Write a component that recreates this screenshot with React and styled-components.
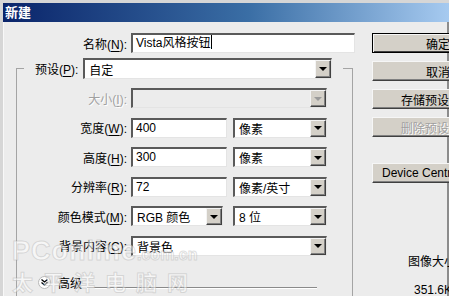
import React from "react";
import styled, { createGlobalStyle } from "styled-components";

const GlobalStyle = createGlobalStyle`
  html, body {
    margin: 0;
    padding: 0;
    background: #ececec;
  }
  body {
    width: 449px;
    height: 296px;
    overflow: hidden;
    font-family: "Liberation Sans", "Noto Sans CJK SC", sans-serif;
    font-size: 12px;
    color: #000;
  }
`;

const Window = styled.div`
  position: relative;
  width: 449px;
  height: 296px;
  box-sizing: border-box;
  overflow: hidden;
  padding-top: 3px;
  background: #d6d6d6;
  display: flex;
  flex-direction: column;
`;

const TitleBar = styled.div`
  height: 19px;
  margin-left: 3px;
  padding-left: 2px;
  line-height: 19px;
  font-weight: bold;
  font-size: 13px;
  color: #fff;
  background: linear-gradient(to right, #0a246a 0%, #3a6ea5 55%, #a6caf0 100%);
`;

const Body = styled.div`
  flex: 1;
  display: flex;
  margin-left: 3px;
  padding-top: 11px;
  background: #ececec;
  border-left: 1px solid #f8f8f8;
  border-right: 2px solid #8c8c8c;
  border-bottom: 2px solid #8c8c8c;
`;

const FormCol = styled.div`
  width: 367px;
  flex-shrink: 0;
  display: flex;
  flex-direction: column;
`;

const NameRow = styled.div`
  display: grid;
  grid-template-columns: 123px 224px;
  column-gap: 4px;
  align-items: center;
  height: 20px;
`;

const Label = styled.span`
  text-align: right;
  white-space: nowrap;
  color: ${(p) => (p.$disabled ? "#a0a0a0" : "#000")};
  text-shadow: ${(p) => (p.$disabled ? "1px 1px 0 #fff" : "none")};
`;

const Key = styled.u`
  text-underline-offset: 2px;
`;

const Input = styled.div`
  box-sizing: border-box;
  width: ${(p) => p.$w}px;
  height: 20px;
  padding-left: 3px;
  line-height: 17px;
  background: #fff;
  border-style: solid;
  border-width: 2px 1px 1px 2px;
  border-color: #5a5a5a #e4e4e4 #e4e4e4 #5a5a5a;
  white-space: nowrap;
  overflow: hidden;
`;

const Caret = styled.span`
  display: inline-block;
  width: 1px;
  height: 14px;
  margin-left: 1px;
  vertical-align: -2px;
  background: #000;
`;

const Select = styled.div`
  box-sizing: border-box;
  width: ${(p) => p.$w}px;
  height: ${(p) => p.$h || 20}px;
  display: flex;
  align-items: center;
  padding-left: 4px;
  background: ${(p) => (p.$disabled ? "#ececec" : "#fff")};
  border-style: solid;
  border-width: 2px 1px 1px 2px;
  border-color: #5a5a5a #e4e4e4 #e4e4e4 #5a5a5a;
  white-space: nowrap;
`;

const SelectText = styled.span`
  flex: 1;
  overflow: hidden;
`;

const ArrowBtn = styled.span`
  box-sizing: border-box;
  width: 16px;
  height: 100%;
  display: flex;
  align-items: center;
  justify-content: center;
  background: #d4d0c8;
  border-style: solid;
  border-width: 1px;
  border-color: #f4f4f4 #404040 #404040 #f4f4f4;
  box-shadow: inset -1px -1px 0 #808080;
  &::after {
    content: "";
    width: 0;
    height: 0;
    border-left: 4px solid transparent;
    border-right: 4px solid transparent;
    border-top: 4px solid ${(p) => (p.$disabled ? "#9a9a9a" : "#000")};
  }
`;

const Group = styled.fieldset`
  box-sizing: border-box;
  width: 337px;
  min-width: 0;
  margin: 5px 0 0 12px;
  padding: 9px 0 0 0;
  border: 1px solid #a4a4a4;
  border-bottom: none;
  flex: 1;
`;

const Legend = styled.legend`
  margin-left: 7px;
  padding: 0 11px;
`;

const LegendInner = styled.div`
  display: flex;
  align-items: center;
  gap: 5px;
`;

const Rows = styled.div`
  display: grid;
  grid-template-columns: 110px auto;
  column-gap: 4px;
  row-gap: 9.5px;
  align-items: center;
`;

const Fields = styled.div`
  display: flex;
  gap: ${(p) => p.$gap || 6}px;
`;

const Advanced = styled.div`
  display: flex;
  align-items: center;
  margin-top: 20px;
  padding-left: 21px;
  height: 14px;
`;

const Chevron = styled.span`
  box-sizing: border-box;
  width: 13px;
  height: 13px;
  border-radius: 50%;
  background: #fff;
  border: 1px solid #b8b8b8;
  display: flex;
  align-items: center;
  justify-content: center;
`;

const AdvText = styled.span`
  margin-left: 7px;
`;

const Rule = styled.span`
  width: 230px;
  margin-left: 5px;
  height: 0;
  border-top: 1px solid #8a8a8a;
  border-bottom: 1px solid #fff;
  align-self: flex-end;
  margin-bottom: 1px;
`;

const SideCol = styled.div`
  display: flex;
  flex-direction: column;
  gap: 8px;
  padding-left: 1px;
`;

const Button = styled.div`
  box-sizing: border-box;
  width: 132px;
  height: 20px;
  display: flex;
  align-items: center;
  justify-content: ${(p) => (p.$left ? "flex-start" : "center")};
  padding-left: ${(p) => (p.$left ? 9 : 0)}px;
  margin-top: ${(p) => p.$mt || 0}px;
  background: #d4d0c8;
  white-space: nowrap;
  color: ${(p) => (p.$disabled ? "#a0a0a0" : "#000")};
  text-shadow: ${(p) => (p.$disabled ? "1px 1px 0 #fff" : "none")};
  border-style: solid;
  border-width: 1px;
  border-color: ${(p) =>
    p.$default ? "#000" : "#f6f6f6 #404040 #404040 #f6f6f6"};
  box-shadow: ${(p) =>
    p.$default
      ? "inset 1px 1px 0 #f6f6f6, inset -1px -1px 0 #404040"
      : "inset -1px -1px 0 #808080"};
`;

const Info = styled.div`
  margin-left: 36px;
  margin-top: ${(p) => p.$mt}px;
  white-space: nowrap;
`;

const Watermark = styled.div`
  position: absolute;
  left: 12px;
  top: 238px;
  display: flex;
  flex-direction: column;
  pointer-events: none;
  color: rgba(255, 255, 255, 0.55);
  -webkit-text-stroke: 1px rgba(160, 160, 160, 0.35);
  font-weight: bold;
`;

const WmLatin = styled.span`
  font-family: "Liberation Sans", sans-serif;
  font-size: 27px;
  line-height: 26px;
  letter-spacing: 1px;
  & small {
    font-size: 16px;
    letter-spacing: 0;
  }
`;

const WmHan = styled.span`
  font-family: "Noto Sans CJK SC", sans-serif;
  font-size: 21px;
  line-height: 26px;
  letter-spacing: 10px;
`;

function Dropdown({ w, h, text, disabled }) {
  return (
    <Select $w={w} $h={h} $disabled={disabled}>
      <SelectText>{text}</SelectText>
      <ArrowBtn $disabled={disabled} />
    </Select>
  );
}

export default function App() {
  return (
    <>
      <GlobalStyle />
      <Window>
        <TitleBar>新建</TitleBar>
        <Body>
          <FormCol>
            <NameRow>
              <Label>
                名称(<Key>N</Key>):
              </Label>
              <Input $w={224}>
                Vista风格按钮
                <Caret />
              </Input>
            </NameRow>
            <Group>
              <Legend>
                <LegendInner>
                  <Label>
                    预设(<Key>P</Key>):
                  </Label>
                  <Dropdown w={249} h={21} text="自定" />
                </LegendInner>
              </Legend>
              <Rows>
                <Label $disabled>
                  大小(<Key>I</Key>):
                </Label>
                <Dropdown w={196} text="" disabled />

                <Label>
                  宽度(<Key>W</Key>):
                </Label>
                <Fields>
                  <Input $w={96}>400</Input>
                  <Dropdown w={94} text="像素" />
                </Fields>

                <Label>
                  高度(<Key>H</Key>):
                </Label>
                <Fields>
                  <Input $w={96}>300</Input>
                  <Dropdown w={94} text="像素" />
                </Fields>

                <Label>
                  分辨率(<Key>R</Key>):
                </Label>
                <Fields>
                  <Input $w={96}>72</Input>
                  <Dropdown w={94} text="像素/英寸" />
                </Fields>

                <Label>
                  颜色模式(<Key>M</Key>):
                </Label>
                <Fields $gap={10}>
                  <Dropdown w={92} text="RGB 颜色" />
                  <Dropdown w={94} text="8 位" />
                </Fields>

                <Label>
                  背景内容(<Key>C</Key>):
                </Label>
                <Dropdown w={196} text="背景色" />
              </Rows>
              <Advanced>
                <Chevron>
                  <svg width="7" height="7" viewBox="0 0 7 7">
                    <path
                      d="M0.5 0.5 L3.5 3 L6.5 0.5 M0.5 3.5 L3.5 6 L6.5 3.5"
                      fill="none"
                      stroke="#000"
                      strokeWidth="1.3"
                    />
                  </svg>
                </Chevron>
                <AdvText>高级</AdvText>
                <Rule />
              </Advanced>
            </Group>
          </FormCol>
          <SideCol>
            <Button $default>确定</Button>
            <Button>取消</Button>
            <Button>存储预设(S)...</Button>
            <Button $disabled>删除预设(D)...</Button>
            <Button $mt={18} $left>
              Device Central...
            </Button>
            <Info $mt={61}>图像大小:</Info>
            <Info $mt={6} style={{ marginLeft: 42 }}>
              351.6K
            </Info>
          </SideCol>
        </Body>
        <Watermark>
          <WmLatin>
            PConline<small>.com.cn</small>
          </WmLatin>
          <WmHan>太平洋电脑网</WmHan>
        </Watermark>
      </Window>
    </>
  );
}
